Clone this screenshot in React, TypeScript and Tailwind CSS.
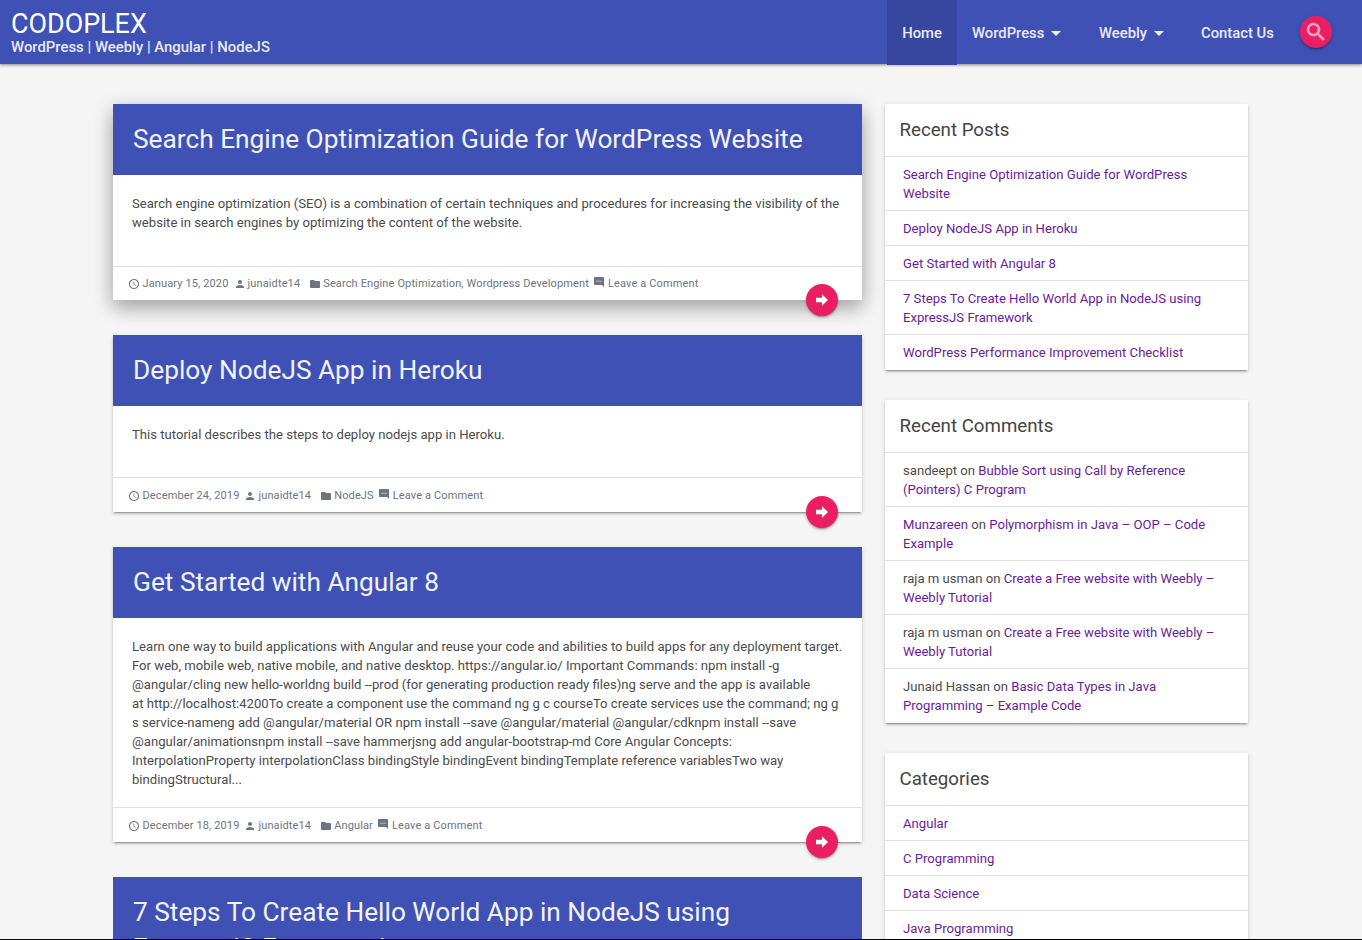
import React from "react";

const Clock = () => (
  <svg viewBox="0 0 24 24" className="w-3 h-3 shrink-0" fill="#6c757d"><path d="M11.99 2C6.47 2 2 6.48 2 12s4.47 10 9.99 10C17.52 22 22 17.52 22 12S17.52 2 11.99 2zM12 20c-4.42 0-8-3.58-8-8s3.58-8 8-8 8 3.58 8 8-3.58 8-8 8zm.5-13H11v6l5.25 3.15.75-1.23-4.5-2.67z" /></svg>
);
const Person = () => (
  <svg viewBox="0 0 24 24" className="w-3 h-3 shrink-0" fill="#6c757d"><path d="M12 12c2.21 0 4-1.79 4-4s-1.79-4-4-4-4 1.79-4 4 1.79 4 4 4zm0 2c-2.67 0-8 1.34-8 4v2h16v-2c0-2.66-5.33-4-8-4z" /></svg>
);
const Folder = () => (
  <svg viewBox="0 0 24 24" className="w-3 h-3 shrink-0" fill="#6c757d"><path d="M10 4H4c-1.1 0-2 .9-2 2v12c0 1.1.9 2 2 2h16c1.1 0 2-.9 2-2V8c0-1.1-.9-2-2-2h-8l-2-2z" /></svg>
);
const Comment = () => (
  <svg viewBox="0 0 24 24" className="w-3 h-3 shrink-0 -mt-[3px]" fill="#6c757d"><path d="M21.99 4c0-1.1-.89-2-1.99-2H4c-1.1 0-2 .9-2 2v12c0 1.1.9 2 2 2h14l4 4-.01-18z" /><path d="M6 10.5h12" stroke="#c4c8cc" strokeWidth="1.6" /></svg>
);
const Arrow = () => (
  <svg viewBox="0 0 24 24" className="w-4 h-4" fill="#fff"><path d="M12 3.5 21 12l-9 8.5V15.5H3v-7h9z" /></svg>
);
const Caret = () => (
  <span className="ml-[7px] inline-block w-0 h-0 border-x-[5px] border-x-transparent border-t-[5px] border-t-[#eef0fa]" />
);

type Post = { title: string; body: React.ReactNode; date: string; cats: string; bodyClass: string; footClass: string; shadow: string };

const flat = "shadow-[0_2px_2px_0_rgba(0,0,0,0.14),0_3px_1px_-2px_rgba(0,0,0,0.2),0_1px_5px_0_rgba(0,0,0,0.12)]";

const posts: Post[] = [
  {
    title: "Search Engine Optimization Guide for WordPress Website",
    body: (
      <>
        Search engine optimization (SEO) is a combination of certain techniques and procedures for increasing the visibility of the
        <br />
        website in search engines by optimizing the content of the website.
      </>
    ),
    date: "January 15, 2020",
    cats: "Search Engine Optimization, Wordpress Development",
    bodyClass: "h-[91px]",
    footClass: "h-[34px]",
    shadow: "shadow-[0_8px_17px_0_rgba(0,0,0,0.2),0_6px_20px_0_rgba(0,0,0,0.19)]",
  },
  {
    title: "Deploy NodeJS App in Heroku",
    body: "This tutorial describes the steps to deploy nodejs app in Heroku.",
    date: "December 24, 2019",
    cats: "NodeJS",
    bodyClass: "h-[71px]",
    footClass: "h-[35px] pt-[1px]",
    shadow: flat,
  },
  {
    title: "Get Started with Angular 8",
    body: (
      <>
        Learn one way to build applications with Angular and reuse your code and abilities to build apps for any deployment target.
        <br />
        For web, mobile web, native mobile, and native desktop. https://angular.io/ Important Commands: npm install -g
        <br />
        @angular/cling new hello-worldng build --prod (for generating production ready files)ng serve and the app is available
        <br />
        at http://localhost:4200To create a component use the command ng g c courseTo create services use the command; ng g
        <br />
        s service-nameng add @angular/material OR npm install --save @angular/material @angular/cdknpm install --save
        <br />
        @angular/animationsnpm install --save hammerjsng add angular-bootstrap-md Core Angular Concepts:
        <br />
        InterpolationProperty interpolationClass bindingStyle bindingEvent bindingTemplate reference variablesTwo way
        <br />
        bindingStructural...
      </>
    ),
    date: "December 18, 2019",
    cats: "Angular",
    bodyClass: "h-[189px]",
    footClass: "h-[35px] pt-[1px]",
    shadow: flat,
  },
];

const PostCard = ({ p }: { p: Post }) => (
  <article className={`relative bg-white mb-[35px] ${p.shadow}`}>
    <h2 className="bg-[#3f51b5] h-[71px] pb-[1px] flex items-center pl-[20px] text-[26.25px] leading-[36px] font-normal text-[#f1f3fb]">{p.title}</h2>
    <div className={`${p.bodyClass} pl-[19px] pr-[18px] pt-[19px] text-[13.12px] leading-[19px] text-[#4b4b4b] whitespace-nowrap overflow-hidden`}>{p.body}</div>
    <div className={`${p.footClass} border-t border-t-[#e0e0e0] pl-[15px] flex items-center text-[11px] text-[#6c757d] tracking-[0.13px]`}>
      <Clock />
      <span className="ml-[2.5px] mt-[1px]">{p.date}</span>
      <span className="ml-[5px]"><Person /></span>
      <span className="ml-[2px] mt-[1px]">junaidte14</span>
      <span className="ml-[9px]"><Folder /></span>
      <span className="ml-[2px] mt-[1px]">{p.cats}</span>
      <span className="ml-[4px]"><Comment /></span>
      <span className="ml-[3px] mt-[1px]">Leave a Comment</span>
    </div>
    <a className={`absolute right-[24px] -bottom-[16px] w-8 h-8 rounded-full bg-[#e91e63] flex items-center justify-center ${flat}`}>
      <Arrow />
    </a>
  </article>
);

const Link = ({ children }: { children: React.ReactNode }) => <a className="text-[#6a1b9a]">{children}</a>;

const Widget = ({ title, items }: { title: string; items: React.ReactNode[] }) => (
  <section className={`bg-white mb-[30px] pb-[1px] ${flat}`}>
    <h3 className="h-[52px] pl-[14.5px] flex items-center text-[18.7px] font-normal text-[#444444]">{title}</h3>
    <ul>
      {items.map((it, i) => (
        <li key={i} className="border-t border-t-[#e0e0e0] pl-[18px] pr-[20px] pt-[8px] pb-[7px] text-[13.12px] leading-[19px] text-[#4b4b4b]">
          {it}
        </li>
      ))}
    </ul>
  </section>
);

export default function App() {
  return (
    <div className="relative h-[940px] overflow-hidden bg-[#f5f5f5] font-['Roboto',sans-serif] border-b border-b-black">
      <header className="relative z-10 h-16 bg-[#3f51b5] flex justify-between shadow-[0_1px_3px_rgba(0,0,0,0.45)]">
        <div className="pl-[11px] pt-[9px]">
          <div className="text-[26.9px] leading-[30px] text-white">CODOPLEX</div>
          <div className="text-[14.9px] leading-[18px] font-medium text-[#e8eaf6] -mt-[1px]">WordPress | Weebly | Angular | NodeJS</div>
        </div>
        <nav className="flex items-center pr-[30px] text-[14.8px] font-medium text-[#e8eaf6]">
          <a className="h-[65px] w-[70px] pt-[2px] bg-[#37479f] flex items-center justify-center">Home</a>
          <a className="ml-[15px] pt-[2px] w-[90px] flex items-center">WordPress<Caret /></a>
          <a className="ml-[37px] pt-[2px] w-[65px] flex items-center">Weebly<Caret /></a>
          <a className="ml-[37px] pt-[2px] w-[74px] whitespace-nowrap">Contact Us</a>
          <button className={`ml-[25px] w-8 h-8 rounded-full bg-[#e91e63] flex items-center justify-center ${flat}`}>
            <svg viewBox="0 0 24 24" className="w-6 h-6" fill="#f8a5c2" stroke="#f8a5c2" strokeWidth="0.6"><path d="M15.5 14h-.79l-.28-.27A6.47 6.47 0 0 0 16 9.5 6.5 6.5 0 1 0 9.5 16c1.61 0 3.09-.59 4.23-1.57l.27.28v.79l5 4.99L20.49 19l-4.99-5zm-6 0C7.01 14 5 11.99 5 9.5S7.01 5 9.5 5 14 7.01 14 9.5 11.99 14 9.5 14z" /></svg>
          </button>
        </nav>
      </header>
      <main className="flex pl-[113px] pt-10">
        <div className="w-[749px] shrink-0">
          {posts.map((p) => (
            <PostCard key={p.title} p={p} />
          ))}
          <article className="bg-white">
            <h2 className="bg-[#3f51b5] pt-[17px] pb-[17px] pl-[20px] pr-[100px] text-[26.25px] leading-[36px] font-normal text-[#f1f3fb]">
              7 Steps To Create Hello World App in NodeJS using ExpressJS Framework
            </h2>
          </article>
        </div>
        <aside className="w-[363px] ml-[23px] shrink-0">
          <Widget
            title="Recent Posts"
            items={[
              <Link>Search Engine Optimization Guide for WordPress Website</Link>,
              <Link>Deploy NodeJS App in Heroku</Link>,
              <Link>Get Started with Angular 8</Link>,
              <Link>7 Steps To Create Hello World App in NodeJS using ExpressJS Framework</Link>,
              <Link>WordPress Performance Improvement Checklist</Link>,
            ]}
          />
          <Widget
            title="Recent Comments"
            items={[
              <>sandeept on <Link>Bubble Sort using Call by Reference (Pointers) C Program</Link></>,
              <><Link>Munzareen</Link> on <Link>Polymorphism in Java – OOP – Code Example</Link></>,
              <>raja m usman on <Link>Create a Free website with Weebly – Weebly Tutorial</Link></>,
              <>raja m usman on <Link>Create a Free website with Weebly – Weebly Tutorial</Link></>,
              <>Junaid Hassan on <Link>Basic Data Types in Java Programming – Example Code</Link></>,
            ]}
          />
          <Widget
            title="Categories"
            items={[
              <Link>Angular</Link>,
              <Link>C Programming</Link>,
              <Link>Data Science</Link>,
              <Link>Java Programming</Link>,
              <Link>NodeJS</Link>,
            ]}
          />
        </aside>
      </main>
    </div>
  );
}
